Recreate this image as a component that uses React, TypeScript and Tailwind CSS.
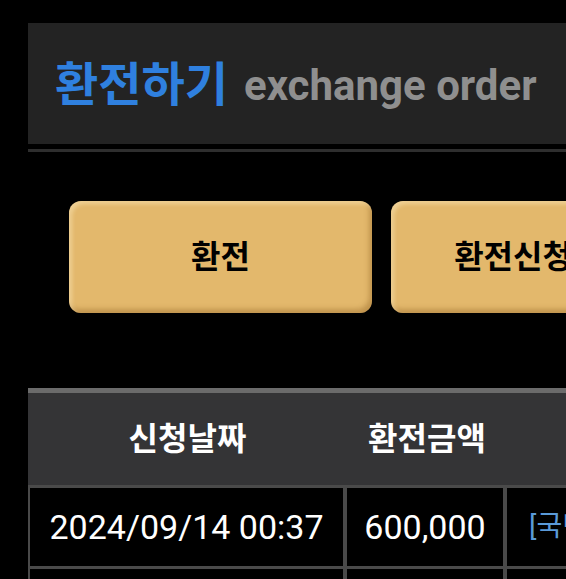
import React from "react";

const font = { fontFamily: 'Roboto, "Noto Sans CJK KR", sans-serif' };

export default function App() {
  return (
    <div className="w-[566px] h-[579px] overflow-hidden bg-black" style={font}>
      <div className="ml-[28px] w-[900px] pt-[23px]">
        <div className="h-[121px] bg-[#232323] flex items-center pl-[27px]">
          <span className="text-[47px] font-bold text-[#2f80df] leading-none mt-[2px]">환전하기</span>
          <span className="ml-[16px] text-[42px] font-bold text-[#8f8f8f] leading-none mt-[4px]">exchange order</span>
        </div>
        <div className="mt-[5px] h-[3px] bg-[#2e2e2e]" />
        <div className="mt-[49px] ml-[41px] flex gap-[19px]">
          {["환전", "환전신청내역"].map((t) => (
            <div
              key={t}
              className="w-[303px] h-[112px] shrink-0 rounded-[12px] bg-[#e3b86c] flex items-center justify-center text-[32px] font-bold text-black shadow-[inset_3px_3px_4px_rgba(255,240,200,0.45),inset_-3px_-4px_5px_rgba(150,105,40,0.45)]"
            >
              {t}
            </div>
          ))}
        </div>
        <div className="mt-[75px] border-t-[5px] border-[#6b6b6b]">
          <div className="flex h-[92px] bg-[#343436] text-white text-[32px] font-bold items-center">
            <div className="w-[319px] text-center">신청날짜</div>
            <div className="w-[160px] text-center">환전금액</div>
            <div className="flex-1" />
          </div>
          <div className="h-[3px] bg-[#4a4a4a]" />
          <div className="flex h-[78px] text-white text-[34px] border-l-[2px] border-[#4a4a4a]">
            <div className="w-[317px] flex items-center justify-center border-r-[4px] border-[#4a4a4a]">2024/09/14 00:37</div>
            <div className="w-[160px] flex items-center justify-center border-r-[4px] border-[#4a4a4a]">600,000</div>
            <div className="flex-1 flex items-center pl-[22px] text-[28px] text-[#5a9ad8]">[국민은행] 123456789</div>
          </div>
          <div className="h-[3px] bg-[#4a4a4a]" />
          <div className="flex h-[40px] border-l-[2px] border-[#4a4a4a]">
            <div className="w-[317px] border-r-[4px] border-[#4a4a4a]" />
            <div className="w-[160px] border-r-[4px] border-[#4a4a4a]" />
            <div className="flex-1" />
          </div>
        </div>
      </div>
    </div>
  );
}
